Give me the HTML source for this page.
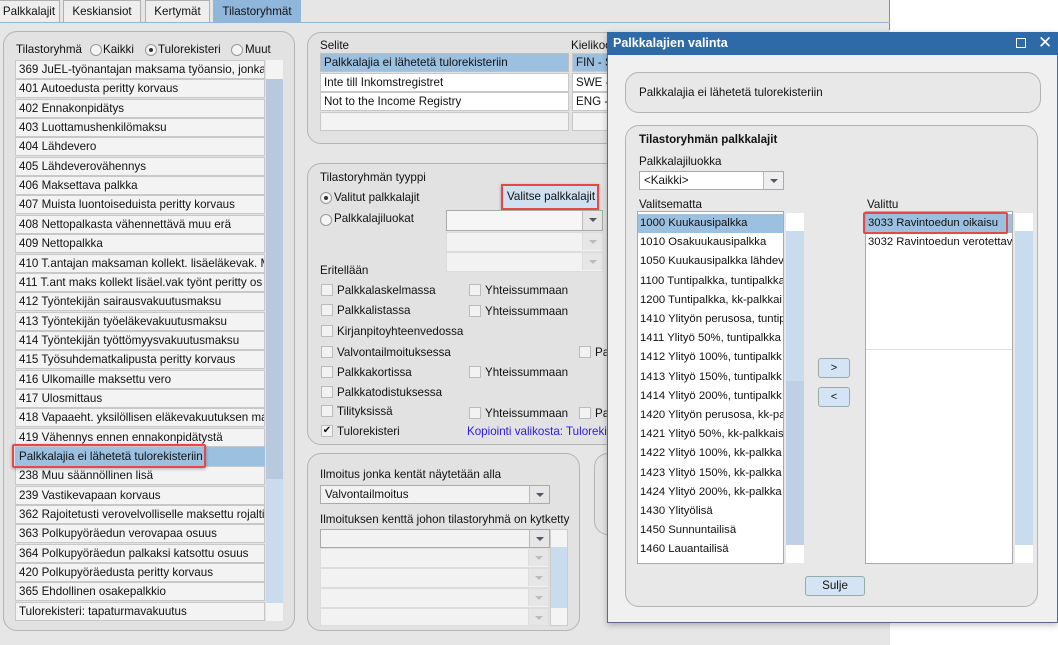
<!DOCTYPE html>
<html><head><meta charset="utf-8"><style>
*{box-sizing:border-box;margin:0;padding:0}
body{width:1058px;height:645px;position:relative;overflow:hidden;background:#e6e6e6;font-family:"Liberation Sans",Arial,sans-serif;font-size:11.6px;color:#111}
.a{position:absolute}
.tab{position:absolute;top:0;height:22px;border:1px solid #b0b0b0;border-bottom:none;background:#eeeeee;text-align:center;line-height:22px;font-size:11.6px}
.panel{position:absolute;border:1px solid #b4b4b4;border-radius:14px;background:#e2e2e2}
.row{position:absolute;left:0;width:250px;height:19px;border:1px solid #c8c8c8;background:#f3f3f3;padding-left:3px;line-height:17px;white-space:nowrap;overflow:hidden;font-size:11.6px}
.cb{position:absolute;width:12px;height:12px;border:1px solid #bbb;background:#f2f2f2}
.lbl{position:absolute;white-space:nowrap;font-size:11.6px}
.rad{position:absolute;width:12px;height:12px;border:1px solid #999;border-radius:50%;background:#f4f4f4}
.combo{position:absolute;border:1px solid #aaa;background:#f2f2f2;height:19px}
.combo .btn{position:absolute;right:0;top:0;width:20px;height:17px;border-left:1px solid #bbb;background:#e6e6e6}
.tri{position:absolute;left:6px;top:7px;width:0;height:0;border-left:4px solid transparent;border-right:4px solid transparent;border-top:4px solid #556}
.li{position:absolute;left:0;width:145px;height:19px;line-height:19px;padding-left:2px;white-space:nowrap;overflow:hidden;font-size:11.3px;background:#fff}
</style></head><body>
<div class="a" style="left:890px;top:0;width:168px;height:645px;background:#fff"></div>
<div class="a" style="left:889px;top:0;width:1px;height:30px;background:#8a8a9a"></div>
<div class="a" style="left:0;top:22px;width:890px;height:1px;background:#8fb7dc"></div>
<div class="tab" style="left:-2px;width:62px">Palkkalajit</div>
<div class="tab" style="left:63px;width:78px">Keskiansiot</div>
<div class="tab" style="left:145px;width:65px">Kertymät</div>
<div class="tab" style="left:213px;width:88px;background:#8fb7dc;border-color:#8fb7dc">Tilastoryhmät</div>

<!-- left panel -->
<div class="panel" style="left:3px;top:31px;width:292px;height:600px"></div>
<div class="lbl" style="left:16px;top:43px">Tilastoryhmä</div>
<div class="rad" style="left:90px;top:44px"></div><div class="lbl" style="left:103px;top:43px">Kaikki</div>
<div class="rad" style="left:145px;top:44px"><div class="a" style="left:3px;top:3px;width:4px;height:4px;border-radius:50%;background:#333"></div></div><div class="lbl" style="left:158px;top:43px">Tulorekisteri</div>
<div class="rad" style="left:231px;top:44px"></div><div class="lbl" style="left:245px;top:43px">Muut</div>
<div class="a" style="left:15px;top:60px;width:251px;height:562px">
<div class="row" style="top:0">369 JuEL-työnantajan maksama työansio, jonka</div>
<div class="row" style="top:19.35px">401 Autoedusta peritty korvaus</div>
<div class="row" style="top:38.7px">402 Ennakonpidätys</div>
<div class="row" style="top:58px">403 Luottamushenkilömaksu</div>
<div class="row" style="top:77.4px">404 Lähdevero</div>
<div class="row" style="top:96.7px">405 Lähdeverovähennys</div>
<div class="row" style="top:116px">406 Maksettava palkka</div>
<div class="row" style="top:135.4px">407 Muista luontoiseduista peritty korvaus</div>
<div class="row" style="top:154.8px">408 Nettopalkasta vähennettävä muu erä</div>
<div class="row" style="top:174px">409 Nettopalkka</div>
<div class="row" style="top:193.5px">410 T.antajan maksaman kollekt. lisäeläkevak. M</div>
<div class="row" style="top:212.8px">411 T.ant maks kollekt lisäel.vak työnt peritty os</div>
<div class="row" style="top:232px">412 Työntekijän sairausvakuutusmaksu</div>
<div class="row" style="top:251.5px">413 Työntekijän työeläkevakuutusmaksu</div>
<div class="row" style="top:270.9px">414 Työntekijän työttömyysvakuutusmaksu</div>
<div class="row" style="top:290px">415 Työsuhdematkalipusta peritty korvaus</div>
<div class="row" style="top:309.6px">416 Ulkomaille maksettu vero</div>
<div class="row" style="top:329px">417 Ulosmittaus</div>
<div class="row" style="top:348.3px">418 Vapaaeht. yksilöllisen eläkevakuutuksen ma</div>
<div class="row" style="top:367.6px">419 Vähennys ennen ennakonpidätystä</div>
<div class="row" style="top:387px;background:#9cc0e0;border-color:#9cc0e0">Palkkalajia ei lähetetä tulorekisteriin</div>
<div class="row" style="top:406.3px">238 Muu säännöllinen lisä</div>
<div class="row" style="top:425.7px">239 Vastikevapaan korvaus</div>
<div class="row" style="top:445px">362 Rajoitetusti verovelvolliselle maksettu rojalti</div>
<div class="row" style="top:464.4px">363 Polkupyöräedun verovapaa osuus</div>
<div class="row" style="top:483.7px">364 Polkupyöräedun palkaksi katsottu osuus</div>
<div class="row" style="top:503px">420 Polkupyöräedusta peritty korvaus</div>
<div class="row" style="top:522.4px">365 Ehdollinen osakepalkkio</div>
<div class="row" style="top:541.8px">Tulorekisteri: tapaturmavakuutus</div>
</div>
<div class="a" style="left:12px;top:444px;width:194px;height:24px;border:2px solid #e8474a;border-radius:2px;box-shadow:0 1px 3px rgba(0,0,0,.3)"></div>
<div class="a" style="left:266px;top:60px;width:17px;height:543px;background:#c9dcee"></div>
<div class="a" style="left:266px;top:79px;width:17px;height:400px;background:#b8c9dd"></div>
<div class="a" style="left:266px;top:60px;width:17px;height:19px;background:#f4f4f4"></div>
<div class="a" style="left:266px;top:603px;width:17px;height:18px;background:#f4f4f4"></div>

<!-- Selite panel -->
<div class="panel" style="left:307px;top:32px;width:320px;height:112px"></div>
<div class="lbl" style="left:320px;top:39px">Selite</div>
<div class="lbl" style="left:571px;top:39px">Kielikoo</div>
<div class="row" style="left:320px;top:53px;width:249px;background:#9cc0e0;border-color:#c0c0c0">Palkkalajia ei lähetetä tulorekisteriin</div>
<div class="row" style="left:320px;top:73px;width:249px;background:#fff">Inte till Inkomstregistret</div>
<div class="row" style="left:320px;top:92px;width:249px;background:#fff">Not to the Income Registry</div>
<div class="row" style="left:320px;top:112px;width:249px">&nbsp;</div>
<div class="row" style="left:572px;top:53px;width:40px;background:#9cc0e0">FIN - S</div>
<div class="row" style="left:572px;top:73px;width:40px;background:#fff">SWE -</div>
<div class="row" style="left:572px;top:92px;width:40px;background:#fff">ENG -</div>
<div class="row" style="left:572px;top:112px;width:40px">&nbsp;</div>

<!-- Tyyppi panel -->
<div class="panel" style="left:307px;top:163px;width:320px;height:282px"></div>
<div class="lbl" style="left:320px;top:171px">Tilastoryhmän tyyppi</div>
<div class="rad" style="left:320px;top:192px"><div class="a" style="left:3px;top:3px;width:4px;height:4px;border-radius:50%;background:#333"></div></div><div class="lbl" style="left:334px;top:191px">Valitut palkkalajit</div>
<div class="rad" style="left:320px;top:214px"></div><div class="lbl" style="left:334px;top:212px">Palkkalajiluokat</div>
<div class="a" style="left:501px;top:184px;width:98px;height:26px;border:2px solid #e8474a;background:#cfe0f0;box-shadow:0 1px 3px rgba(0,0,0,.3);font-size:11.6px;line-height:22px;padding-left:4px;white-space:nowrap;overflow:hidden">Valitse palkkalajit</div>
<div class="combo" style="left:446px;top:210px;width:157px;height:21px;background:#f6f6f6"><div class="btn" style="height:19px"><div class="tri"></div></div></div>
<div class="combo" style="left:446px;top:232px;width:157px;height:20px;border-color:#ddd"><div class="btn" style="border-color:#ddd"><div class="tri" style="border-top-color:#bbb"></div></div></div>
<div class="combo" style="left:446px;top:252px;width:157px;height:20px;border-color:#ddd"><div class="btn" style="border-color:#ddd"><div class="tri" style="border-top-color:#bbb"></div></div></div>
<div class="lbl" style="left:320px;top:264px">Eritellään</div>
<div class="cb" style="left:321px;top:284px"></div><div class="lbl" style="left:337px;top:284px">Palkkalaskelmassa</div>
<div class="cb" style="left:469px;top:284px"></div><div class="lbl" style="left:485px;top:284px">Yhteissummaan</div>
<div class="cb" style="left:321px;top:304px"></div><div class="lbl" style="left:337px;top:304px">Palkkalistassa</div>
<div class="cb" style="left:469px;top:305px"></div><div class="lbl" style="left:485px;top:305px">Yhteissummaan</div>
<div class="cb" style="left:321px;top:325px"></div><div class="lbl" style="left:337px;top:325px">Kirjanpitoyhteenvedossa</div>
<div class="cb" style="left:321px;top:346px"></div><div class="lbl" style="left:337px;top:346px">Valvontailmoituksessa</div>
<div class="cb" style="left:579px;top:346px"></div><div class="lbl" style="left:595px;top:346px">Pa</div>
<div class="cb" style="left:321px;top:366px"></div><div class="lbl" style="left:337px;top:366px">Palkkakortissa</div>
<div class="cb" style="left:469px;top:366px"></div><div class="lbl" style="left:485px;top:366px">Yhteissummaan</div>
<div class="cb" style="left:321px;top:386px"></div><div class="lbl" style="left:337px;top:386px">Palkkatodistuksessa</div>
<div class="cb" style="left:321px;top:405px"></div><div class="lbl" style="left:337px;top:405px">Tilityksissä</div>
<div class="cb" style="left:469px;top:407px"></div><div class="lbl" style="left:485px;top:407px">Yhteissummaan</div>
<div class="cb" style="left:579px;top:407px"></div><div class="lbl" style="left:595px;top:407px">Pa</div>
<div class="cb" style="left:321px;top:425px;font-size:10px;line-height:10px;text-align:center">✔</div><div class="lbl" style="left:337px;top:425px">Tulorekisteri</div>
<div class="lbl" style="left:467px;top:425px;color:#2a1de0">Kopiointi valikosta: Tulorekis</div>

<!-- Ilmoitus panel -->
<div class="panel" style="left:307px;top:453px;width:273px;height:178px"></div>
<div class="panel" style="left:594px;top:453px;width:40px;height:82px"></div>
<div class="lbl" style="left:320px;top:468px">Ilmoitus jonka kentät näytetään alla</div>
<div class="combo" style="left:320px;top:485px;width:230px;height:19px"><div class="btn"><div class="tri"></div></div><div class="a" style="left:4px;top:2px">Valvontailmoitus</div></div>
<div class="lbl" style="left:320px;top:513px">Ilmoituksen kenttä johon tilastoryhmä on kytketty</div>
<div class="combo" style="left:320px;top:529px;width:230px;height:19px"><div class="btn"><div class="tri"></div></div></div>
<div class="combo" style="left:320px;top:548px;width:229px;height:20px;border-color:#ddd"><div class="btn" style="border-color:#ddd"><div class="tri" style="border-top-color:#bbb"></div></div></div>
<div class="combo" style="left:320px;top:568px;width:229px;height:20px;border-color:#ddd"><div class="btn" style="border-color:#ddd"><div class="tri" style="border-top-color:#bbb"></div></div></div>
<div class="combo" style="left:320px;top:588px;width:229px;height:20px;border-color:#ddd"><div class="btn" style="border-color:#ddd"><div class="tri" style="border-top-color:#bbb"></div></div></div>
<div class="combo" style="left:320px;top:608px;width:229px;height:18px;border-color:#ddd"><div class="btn" style="border-color:#ddd;height:16px"><div class="tri" style="border-top-color:#bbb"></div></div></div>
<div class="a" style="left:550px;top:529px;width:18px;height:97px;background:#c9dcee;border:1px solid #ccc"></div>
<div class="a" style="left:551px;top:530px;width:16px;height:17px;background:#f4f4f4"></div>
<div class="a" style="left:551px;top:608px;width:16px;height:17px;background:#f4f4f4"></div>

<!-- Dialog -->
<div class="a" style="left:607px;top:32px;width:451px;height:591px;background:#f0f0f0;border:1px solid #5a6a8a;box-shadow:0 2px 6px rgba(0,0,0,.25)"></div>
<div class="a" style="left:607px;top:32px;width:451px;height:23px;background:#2e6aa8;color:#fff;font-weight:bold;font-size:12.5px;line-height:23px;padding-left:6px">Palkkalajien valinta</div>
<div class="a" style="left:1016px;top:38px;width:10px;height:10px;border:1.5px solid #fff"></div>
<div class="a" style="left:1038px;top:33px;color:#fff;font-size:17px;line-height:20px">✕</div>
<div class="panel" style="left:625px;top:72px;width:416px;height:41px;background:#e8e8e8"></div>
<div class="lbl" style="left:639px;top:86px">Palkkalajia ei lähetetä tulorekisteriin</div>
<div class="panel" style="left:625px;top:125px;width:413px;height:482px;background:#e8e8e8"></div>
<div class="lbl" style="left:639px;top:133px;font-weight:bold">Tilastoryhmän palkkalajit</div>
<div class="lbl" style="left:639px;top:155px">Palkkalajiluokka</div>
<div class="combo" style="left:639px;top:171px;width:145px;height:19px;background:#fff"><div class="btn" style="background:#eee"><div class="tri"></div></div><div class="a" style="left:4px;top:2px">&lt;Kaikki&gt;</div></div>
<div class="lbl" style="left:639px;top:198px">Valitsematta</div>
<div class="lbl" style="left:867px;top:198px">Valittu</div>
<div class="a" style="left:637px;top:211px;width:147px;height:353px;border:1px solid #aaa;background:#fff;overflow:hidden">
<div class="li" style="top:2px;background:#9cc0e0">1000 Kuukausipalkka</div>
<div class="li" style="top:21.2px">1010 Osakuukausipalkka</div>
<div class="li" style="top:40.4px">1050 Kuukausipalkka lähdev</div>
<div class="li" style="top:59.6px">1100 Tuntipalkka, tuntipalkka</div>
<div class="li" style="top:78.8px">1200 Tuntipalkka, kk-palkkai</div>
<div class="li" style="top:98px">1410 Ylityön perusosa, tuntip</div>
<div class="li" style="top:117.2px">1411 Ylityö 50%, tuntipalkka</div>
<div class="li" style="top:136.4px">1412 Ylityö 100%, tuntipalkk</div>
<div class="li" style="top:155.6px">1413 Ylityö 150%, tuntipalkk</div>
<div class="li" style="top:174.8px">1414 Ylityö 200%, tuntipalkk</div>
<div class="li" style="top:194px">1420 Ylityön perusosa, kk-pal</div>
<div class="li" style="top:213.2px">1421 Ylityö 50%, kk-palkkais</div>
<div class="li" style="top:232.4px">1422 Ylityö 100%, kk-palkka</div>
<div class="li" style="top:251.6px">1423 Ylityö 150%, kk-palkka</div>
<div class="li" style="top:270.8px">1424 Ylityö 200%, kk-palkka</div>
<div class="li" style="top:290px">1430 Ylityölisä</div>
<div class="li" style="top:309.2px">1450 Sunnuntailisä</div>
<div class="li" style="top:328.4px">1460 Lauantailisä</div>
</div>
<div class="a" style="left:786px;top:213px;width:18px;height:350px;background:#c9dcee"></div>
<div class="a" style="left:786px;top:381px;width:18px;height:165px;background:#c0d0e4"></div>
<div class="a" style="left:786px;top:213px;width:18px;height:18px;background:#fff"></div>
<div class="a" style="left:786px;top:545px;width:18px;height:18px;background:#fff"></div>
<div class="a" style="left:865px;top:211px;width:148px;height:353px;border:1px solid #aaa;background:#fff;overflow:hidden">
<div class="li" style="top:2px;background:#9cc0e0;width:146px">3033 Ravintoedun oikaisu</div>
<div class="li" style="top:21.2px;width:146px">3032 Ravintoedun verotettav</div>
<div class="a" style="left:0;top:137px;width:146px;height:1px;background:#ddd"></div>
</div>
<div class="a" style="left:863px;top:212px;width:145px;height:22px;border:2px solid #e8474a;border-radius:2px"></div>
<div class="a" style="left:1015px;top:213px;width:18px;height:350px;background:#c9dcee"></div>
<div class="a" style="left:1015px;top:213px;width:18px;height:18px;background:#fff"></div>
<div class="a" style="left:1015px;top:545px;width:18px;height:18px;background:#fff"></div>
<div class="a" style="left:818px;top:358px;width:32px;height:20px;border:1px solid #9aa;border-radius:3px;background:#d4e4f4;text-align:center;line-height:18px;font-size:11px">&gt;</div>
<div class="a" style="left:818px;top:387px;width:32px;height:20px;border:1px solid #9aa;border-radius:3px;background:#d4e4f4;text-align:center;line-height:18px;font-size:11px">&lt;</div>
<div class="a" style="left:805px;top:576px;width:60px;height:20px;border:1px solid #9aa;border-radius:3px;background:#d4e4f4;text-align:center;line-height:18px">Sulje</div>
</body></html>
